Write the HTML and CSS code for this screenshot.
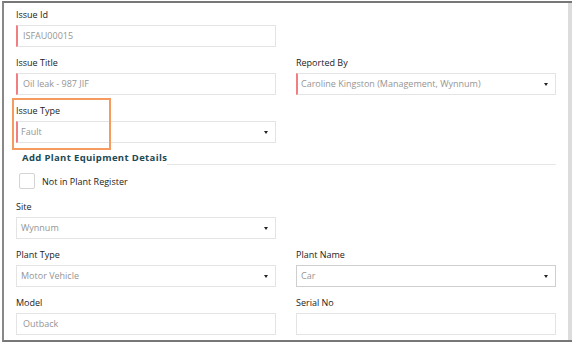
FILE: index.html
```html
<!DOCTYPE html>
<html>
<head>
    <meta charset="utf-8">
    <title>Issue Details</title>
    <link rel="stylesheet" href="styles.css">
</head>
<body>
    <div class="frame">
        <div class="form">
            <div class="grid">
                <div class="field">
                    <label>Issue Id</label>
                    <div class="input required">ISFAU00015</div>
                </div>
                <div class="field"></div>

                <div class="field">
                    <label>Issue Title</label>
                    <div class="input required">Oil leak - 987 JIF</div>
                </div>
                <div class="field">
                    <label>Reported By</label>
                    <div class="input select required">Caroline Kingston (Management, Wynnum)</div>
                </div>

                <div class="field">
                    <label>Issue Type</label>
                    <div class="input select required">Fault</div>
                </div>
                <div class="field"></div>
            </div>

            <div class="section-title">
                <h4>Add Plant Equipment Details</h4>
                <span class="rule"></span>
            </div>

            <div class="check-row">
                <span class="checkbox"></span>
                <span>Not in Plant Register</span>
            </div>

            <div class="grid">
                <div class="field">
                    <label>Site</label>
                    <div class="input select">Wynnum</div>
                </div>
                <div class="field"></div>

                <div class="field">
                    <label>Plant Type</label>
                    <div class="input select">Motor Vehicle</div>
                </div>
                <div class="field">
                    <label>Plant Name</label>
                    <div class="input select active">Car</div>
                </div>

                <div class="field">
                    <label>Model</label>
                    <div class="input">Outback</div>
                </div>
                <div class="field">
                    <label>Serial No</label>
                    <div class="input"></div>
                </div>
            </div>

            <div class="highlight"></div>
        </div>
        <div class="scrollbar"></div>
    </div>
</body>
</html>
```

FILE: styles.css
```css
body {
    margin: 0;
    font-family: 'Open Sans', 'Noto Sans', Arial, sans-serif;
    font-size: 9px;
    color: #222;
    background: white;
}
.frame {
    display: flex;
    width: 568px;
    height: 337px;
    margin: 1px 0 0 2px;
    border-top: 2px solid #777;
    border-bottom: 2px solid #777;
    border-left: 2px solid #888;
    overflow: hidden;
}
.form {
    position: relative;
    flex: 1;
    padding: 5px 0 0 12px;
}
.scrollbar {
    width: 4px;
    background: #dcdcdc;
}
.grid {
    display: grid;
    grid-template-columns: 260px 260px;
    column-gap: 20px;
}
.field {
    margin-bottom: 9px;
}
.field label {
    display: block;
    height: 14px;
    line-height: 14px;
    margin-bottom: 3px;
}
.input {
    position: relative;
    box-sizing: border-box;
    height: 22px;
    line-height: 20px;
    padding-left: 6px;
    border: 1px solid #e4e4e4;
    color: #959595;
    white-space: nowrap;
}
.input.select {
    padding-left: 4px;
}
.input.required {
    border-left: 2px solid #f08080;
    padding-left: 5px;
}
.input.select.required {
    padding-left: 3px;
}
.input.active {
    border-color: #cfcfcf;
}
.select::after {
    content: '';
    position: absolute;
    right: 7px;
    top: 9px;
    border-left: 2.5px solid transparent;
    border-right: 2.5px solid transparent;
    border-top: 3px solid #222;
}
.section-title {
    display: flex;
    align-items: flex-end;
    width: 540px;
    height: 14px;
    margin-top: -1px;
}
.section-title h4 {
    margin: 0 0 0 6px;
    line-height: 14px;
    font-size: 9.5px;
    font-weight: bold;
    letter-spacing: 0.35px;
    color: #1d4a55;
}
.section-title .rule {
    flex: 1;
    border-bottom: 1px solid #e6e6e6;
}
.check-row {
    display: flex;
    align-items: center;
    gap: 7px;
    margin: 8px 0 11px 3px;
}
.checkbox {
    box-sizing: border-box;
    width: 16px;
    height: 16px;
    border: 1px solid #d4d4d4;
    border-radius: 2px;
}
.highlight {
    position: absolute;
    left: 8px;
    top: 95px;
    width: 95px;
    height: 48px;
    border: 2px solid #f59b5f;
}
```
